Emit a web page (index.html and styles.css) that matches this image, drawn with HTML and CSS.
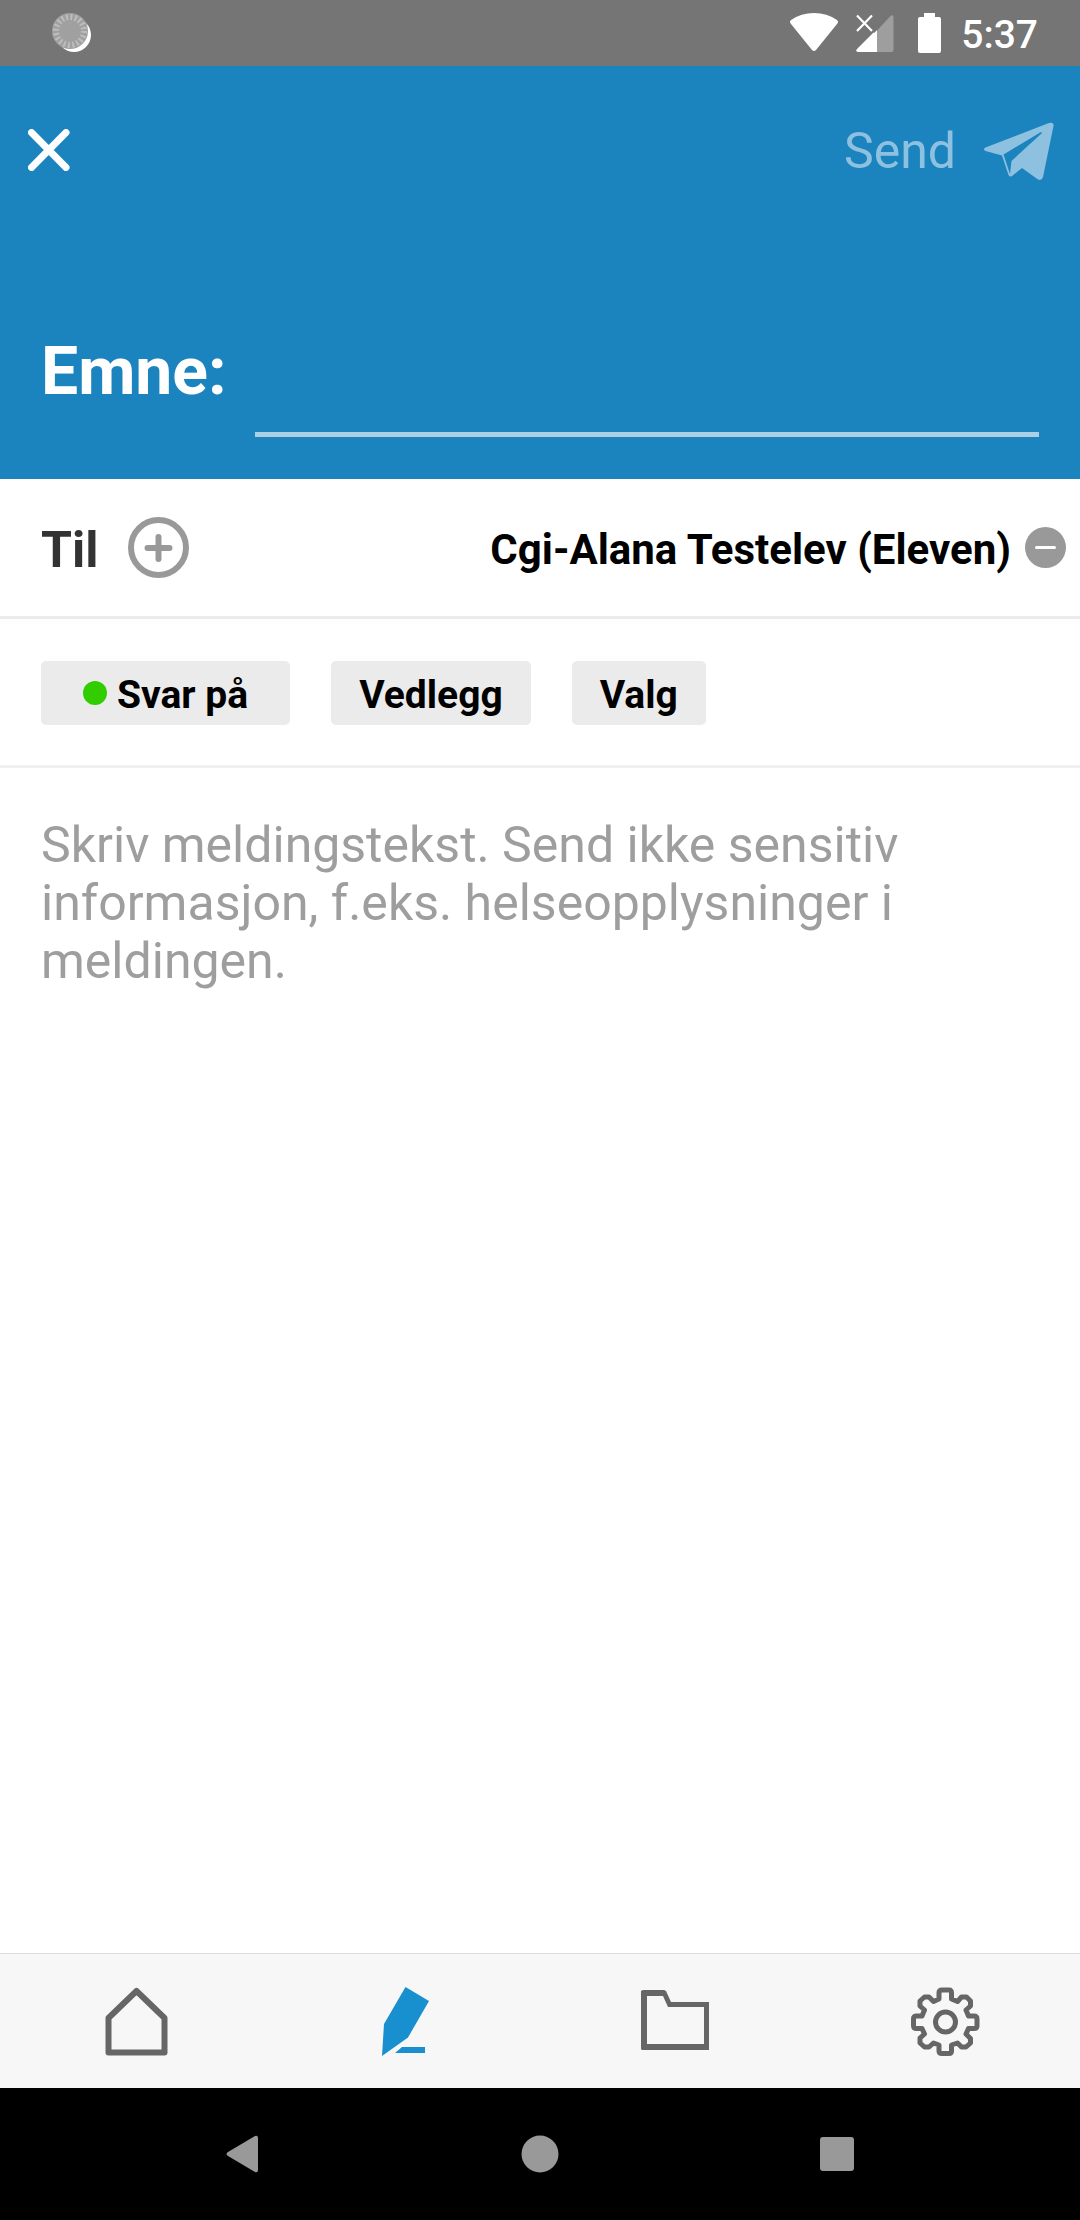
FILE: index.html
```html
<!DOCTYPE html>
<html lang="nb">
<head>
<meta charset="utf-8">
<meta name="viewport" content="width=device-width, initial-scale=1">
<title>Ny melding</title>
<link rel="stylesheet" href="styles.css">
</head>
<body>
<div class="screen">
  <div class="status">
    <svg class="status-sync" width="40" height="40" viewBox="0 0 40 40" aria-hidden="true">
      <circle cx="22" cy="22" r="17" fill="#fff"/>
      <circle cx="18" cy="18" r="18" fill="#a0a0a0"/>
      <circle cx="18" cy="18" r="14" fill="none" stroke="#bdbdbd" stroke-width="6" stroke-dasharray="2 2.398"/>
    </svg>
    <div class="status-icons">
      <svg width="48" height="40" viewBox="0 0 48 40" aria-hidden="true">
        <path fill="#fff" d="M1 11Q-1 9 1 7Q11 0 24 0T47 7Q49 9 47 11L26 37Q24 39 22 37Z"/>
      </svg>
      <svg class="status-signal" width="38" height="40" viewBox="0 0 38 40" aria-hidden="true">
        <path fill="#9e9e9e" d="M21 17.500L34.500 3Q37.500 1 37.500 4V37Q37.500 39 35.500 39H21Z"/>
        <path fill="#fff" d="M21 16V39H2Q-1 38.500 1 36Z"/>
        <path fill="none" stroke="#757575" stroke-width="6" d="M16 18L22 12"/>
        <path fill="none" stroke="#fff" stroke-width="2.200" d="M1 2.500L16 18M16 2.500L1 18"/>
      </svg>
      <svg class="status-battery" width="23" height="40" viewBox="0 0 23 40" aria-hidden="true">
        <path fill="#fff" d="M6 0H17V4H21Q23 4 23 6V38Q23 40 21 40H2Q0 40 0 38V6Q0 4 2 4H6Z"/>
      </svg>
      <time class="clock">5:37</time>
    </div>
  </div>

  <header class="header">
    <div class="toolbar">
      <button class="close" type="button" aria-label="Lukk">
        <svg width="42" height="42" viewBox="0 0 42 42" aria-hidden="true">
          <path d="M3.500 3.500L38 38.500M38 3.500L3.500 38.500" stroke="#fff" stroke-width="7" stroke-linecap="round"/>
        </svg>
      </button>
      <button class="send" type="submit" form="message">
        <span>Send</span>
        <svg width="70" height="58" viewBox="0 0 70 58" aria-hidden="true">
          <path fill="#8dc1df" fill-rule="evenodd" d="M1.500 25.500L65 1Q70 -.500 69.500 4L59 55Q58 59 54 57.500L38 46L28 54Q26 55.500 24.500 53L18 33.500L1.500 29Q-1.500 27 1.500 25.500ZM57 10L19.500 32.500L26 52L27.500 39L58 11Z"/>
        </svg>
      </button>
    </div>
    <div class="subject">
      <label class="subject-label" for="subject">Emne:</label>
      <input class="subject-input" id="subject" type="text" form="message">
    </div>
  </header>

  <form class="compose" id="message">
    <div class="recipients">
      <span class="to">Til</span>
      <button class="icon-button" type="button" aria-label="Legg til mottaker">
        <svg width="61" height="61" viewBox="0 0 61 61" fill="none" stroke="#999" stroke-width="6" stroke-linecap="round" aria-hidden="true">
          <circle cx="30.500" cy="30.500" r="27.500"/>
          <path d="M30.500 20V42M19.500 31H41.500"/>
        </svg>
      </button>
      <div class="recipient">
        <span class="recipient-name">Cgi-Alana Testelev (Eleven)</span>
        <button class="icon-button" type="button" aria-label="Fjern mottaker">
          <svg width="41" height="41" viewBox="0 0 41 41" aria-hidden="true">
            <circle cx="20.500" cy="20.500" r="20.500" fill="#999"/>
            <path d="M11.500 20.500H29.500" stroke="#fff" stroke-width="3" stroke-linecap="round"/>
          </svg>
        </button>
      </div>
    </div>
    <div class="options">
      <button class="chip chip-reply" type="button"><span class="dot"></span>Svar på</button>
      <button class="chip" type="button">Vedlegg</button>
      <button class="chip" type="button">Valg</button>
    </div>
    <textarea class="message" aria-label="Meldingstekst" placeholder="Skriv meldingstekst. Send ikke sensitiv informasjon, f.eks. helseopplysninger i meldingen."></textarea>
  </form>

  <nav class="tabs">
    <a class="tab" href="#home" aria-label="Hjem">
      <svg width="70" height="70" viewBox="0 0 70 70" aria-hidden="true">
        <path d="M8.500 31L36.500 4L64.500 31V65.500H8.500Z" fill="none" stroke="#666" stroke-width="6" stroke-linejoin="round"/>
      </svg>
    </a>
    <a class="tab" href="#compose" aria-label="Ny melding" aria-current="page">
      <svg width="70" height="70" viewBox="0 0 70 70" fill="#188fce" aria-hidden="true">
        <path d="M35.500 0L59 14L38 50.500L12 69L14 37Z"/>
        <path d="M25 66L32 60H55V66Z"/>
      </svg>
    </a>
    <a class="tab" href="#folders" aria-label="Mapper">
      <svg width="70" height="70" viewBox="0 0 70 70" aria-hidden="true">
        <path fill="#666" fill-rule="evenodd" d="M3 3H24L26 4L31 15H69V63H2L1 62V4ZM7 9V57H64V20H28L23 9Z"/>
      </svg>
    </a>
    <a class="tab" href="#settings" aria-label="Innstillinger">
      <svg width="70" height="70" viewBox="0 0 70 70" fill="none" stroke="#666" stroke-width="5" stroke-linejoin="round" aria-hidden="true">
        <path d="M29 6Q29 3 32 3H39Q41.500 3 41.500 6V12L47.500 14.500L51.500 10H56.500L60.500 14V19L56 23L58.500 29H64Q67 29 67 32V39Q67 41.500 64 41.500H58.500L56 47L60.500 51.500V56L56 60H51.500L47.500 56L41.500 58V64Q41.500 66.500 39 66.500H32Q29 66.500 29 64V58L23.500 56L19 60H14.500L10 56V51L14.500 47L12 41.500H6.500Q3.500 41.500 3.500 38.500V32Q3.500 29 6.500 29H12L14.500 23L10 19V14L14.500 10H19L23.500 14.500L29 12Z"/>
        <circle cx="35.500" cy="35" r="10"/>
      </svg>
    </a>
  </nav>

  <div class="system-nav">
    <button class="icon-button" type="button" aria-label="Tilbake">
      <svg width="40" height="38" viewBox="0 0 40 38" aria-hidden="true">
        <path fill="#999" d="M5 17L32 1Q35 0 35 3V35Q35 38 32 37L5 21Q2 19 5 17Z"/>
      </svg>
    </button>
    <button class="icon-button" type="button" aria-label="Startskjerm">
      <svg width="40" height="38" viewBox="0 0 40 38" aria-hidden="true">
        <circle cx="20" cy="19" r="18.500" fill="#999"/>
      </svg>
    </button>
    <button class="icon-button" type="button" aria-label="Oversikt">
      <svg width="40" height="38" viewBox="0 0 40 38" aria-hidden="true">
        <rect x="3" y="2" width="34" height="34" rx="3" fill="#999"/>
      </svg>
    </button>
  </div>
</div>
</body>
</html>
```
FILE: styles.css
```css
* {
  box-sizing: border-box;
}

body {
  margin: 0;
  font-family: Roboto, "Liberation Sans", sans-serif;
  color: #000;
  background: #fff;
}

button,
input,
textarea {
  margin: 0;
  padding: 0;
  border: 0;
  border-radius: 0;
  background: none;
  color: inherit;
  font: inherit;
}

svg {
  display: block;
  flex: none;
}

.screen {
  display: flex;
  flex-direction: column;
  min-height: 100vh;
}

/* System status bar */
.status {
  display: flex;
  align-items: center;
  justify-content: space-between;
  height: 66px;
  padding: 0 42px 0 52px;
  background: #757575;
}

.status-icons {
  display: flex;
  align-items: center;
  color: #fff;
}

.status-signal {
  margin-left: 18px;
}

.status-battery {
  margin: 0 20px 0 24px;
}

.clock {
  padding-top: 4px;
  font-size: 39px;
  font-weight: 500;
  line-height: 48px;
}

/* Blue header */
.header {
  padding-bottom: 42px;
  background: #1b84bf;
  color: #fff;
}

.toolbar {
  display: flex;
  align-items: center;
  justify-content: space-between;
  height: 168px;
  padding: 0 26px 0 28px;
}

.send {
  display: flex;
  align-items: center;
  gap: 28px;
  padding-top: 2px;
  color: #8dc1df;
  font-size: 50px;
  line-height: 58px;
}

.subject {
  display: flex;
  align-items: center;
  gap: 28px;
  margin-top: 68px;
  padding: 0 41px;
}

.subject-label {
  padding-top: 4px;
  font-size: 66px;
  font-weight: 700;
}

.subject-input {
  flex: 1;
  min-width: 0;
  height: 135px;
  border-bottom: 5px solid #abd0e5;
  font-size: 50px;
  outline: 0;
}

/* Message form */
.compose {
  display: flex;
  flex: 1;
  flex-direction: column;
}

.recipients {
  display: flex;
  align-items: center;
  height: 140px;
  padding: 0 14px 0 41px;
  border-bottom: 3px solid #ebebeb;
}

.to {
  margin-right: 30px;
  padding-top: 4px;
  color: #333;
  font-size: 50px;
  font-weight: 700;
}

.recipient {
  display: flex;
  align-items: center;
  gap: 14px;
  margin-left: auto;
  font-size: 42px;
  font-weight: 700;
}

.recipient-name {
  padding-top: 4px;
}

.options {
  display: flex;
  gap: 41px;
  padding: 42px 41px 40px;
  border-bottom: 3px solid #f0f0f0;
}

.chip {
  display: flex;
  align-items: center;
  height: 64px;
  padding: 4px 28px 0;
  border-radius: 5px;
  background: #ebebeb;
  font-size: 39px;
  font-weight: 700;
}

.chip-reply {
  gap: 10px;
  padding: 4px 42px 0;
}

.dot {
  width: 24px;
  height: 24px;
  margin-bottom: 4px;
  border-radius: 50%;
  background: #32cd00;
}

.message {
  flex: 1;
  width: 100%;
  padding: 48px 41px;
  font-size: 50px;
  line-height: 58px;
  resize: none;
  outline: 0;
}

.message::placeholder {
  color: #9e9e9e;
  opacity: 1;
}

/* App tab bar */
.tabs {
  display: grid;
  grid-template-columns: repeat(4, 1fr);
  height: 135px;
  border-top: 1px solid #ddd;
  background: #f7f7f7;
}

.tab {
  display: flex;
  align-items: center;
  justify-content: center;
  padding-top: 2px;
}

/* System navigation */
.system-nav {
  display: flex;
  align-items: center;
  justify-content: space-around;
  height: 132px;
  padding: 0 94px;
  background: #000;
}
```
